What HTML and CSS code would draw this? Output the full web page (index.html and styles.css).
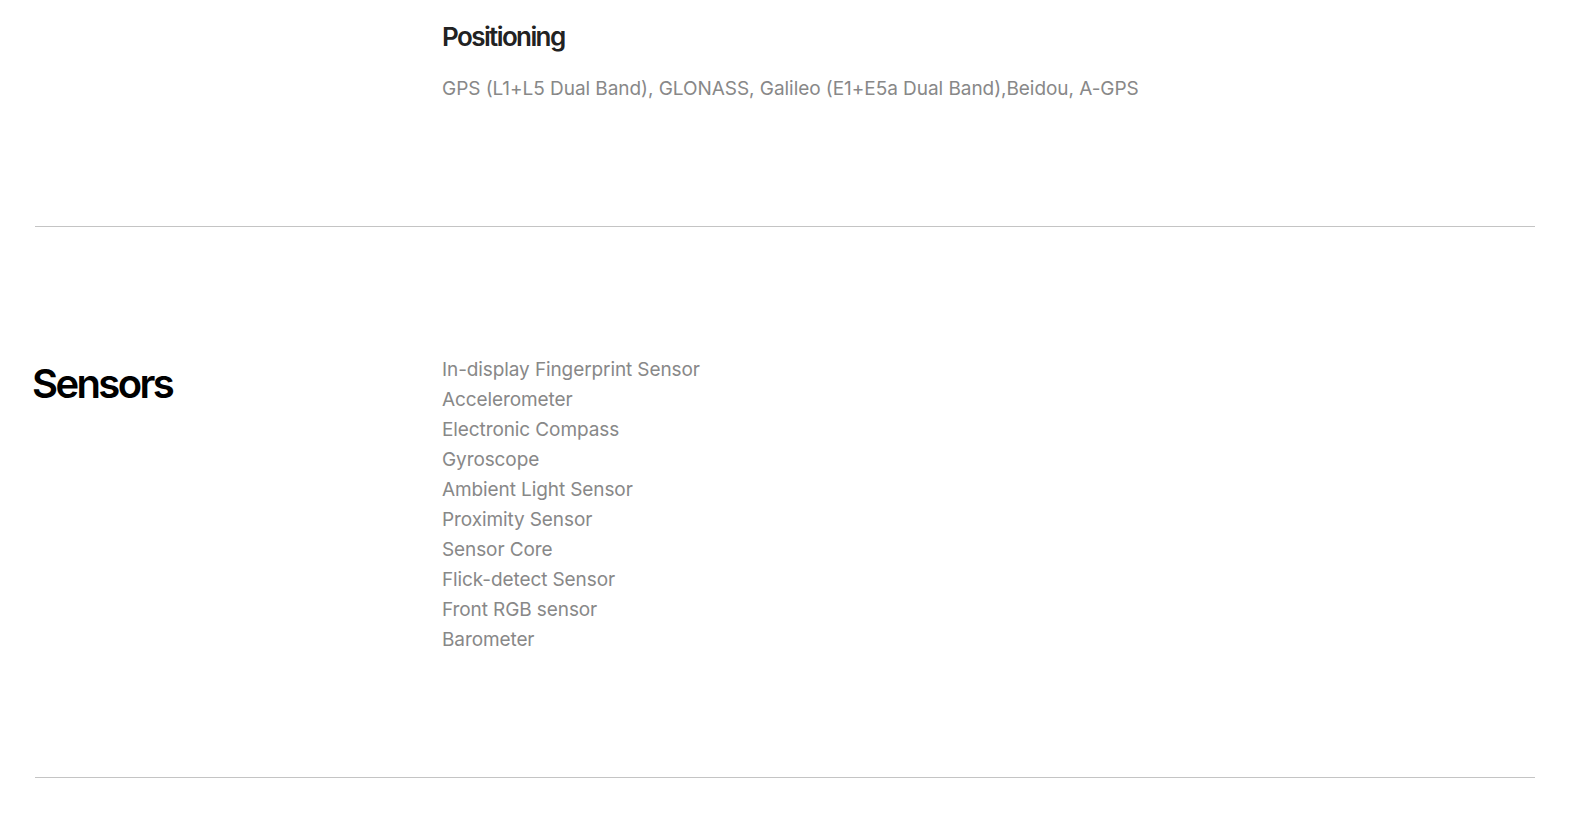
FILE: index.html
```html
<!DOCTYPE html>
<html>
<head>
<meta charset="utf-8">
<link rel="stylesheet" href="styles.css">
</head>
<body>
<main class="specs">
  <section class="spec spec-top">
    <div class="spec-label"></div>
    <div class="spec-body">
      <h3 class="sub-title">Positioning</h3>
      <p class="spec-text">GPS (L1+L5 Dual Band), GLONASS, Galileo (E1+E5a Dual Band),Beidou, A-GPS</p>
    </div>
  </section>
  <section class="spec spec-sensors">
    <div class="spec-label"><h2 class="section-title">Sensors</h2></div>
    <div class="spec-body">
      <ul class="spec-list">
        <li>In-display Fingerprint Sensor</li>
        <li>Accelerometer</li>
        <li>Electronic Compass</li>
        <li>Gyroscope</li>
        <li>Ambient Light Sensor</li>
        <li>Proximity Sensor</li>
        <li>Sensor Core</li>
        <li>Flick-detect Sensor</li>
        <li>Front RGB sensor</li>
        <li>Barometer</li>
      </ul>
    </div>
  </section>
</main>
</body>
</html>
```
FILE: styles.css
```css
html, body {
  margin: 0;
  padding: 0;
  background: #fff;
}
body {
  font-family: Inter, "Noto Sans", "Liberation Sans", sans-serif;
}
.specs {
  width: 1500px;
  margin-left: 35px;
}
.spec {
  display: flex;
  border-bottom: 1px solid #c4c4c4;
}
.spec-label {
  width: 407px;
  flex: none;
}
.spec-body {
  flex: 1;
}
.spec-top {
  height: 226px;
}
.sub-title {
  margin: 20px 0 0;
  font-size: 26px;
  line-height: 34px;
  font-weight: 600;
  letter-spacing: -1.6px;
  color: #222;
}
.spec-text {
  margin: 22px 0 0;
  font-size: 19px;
  line-height: 26px;
  color: #888;
  letter-spacing: -0.05px;
}
.spec-sensors {
  padding: 128px 0 122px;
}
.section-title {
  margin: 5px 0 0 -3px;
  font-size: 40px;
  line-height: 48px;
  font-weight: 600;
  letter-spacing: -2.6px;
  color: #000;
}
.spec-list {
  list-style: none;
  margin: 0;
  padding: 0;
  font-size: 19px;
  line-height: 30px;
  color: #888;
  letter-spacing: -0.1px;
}
```
